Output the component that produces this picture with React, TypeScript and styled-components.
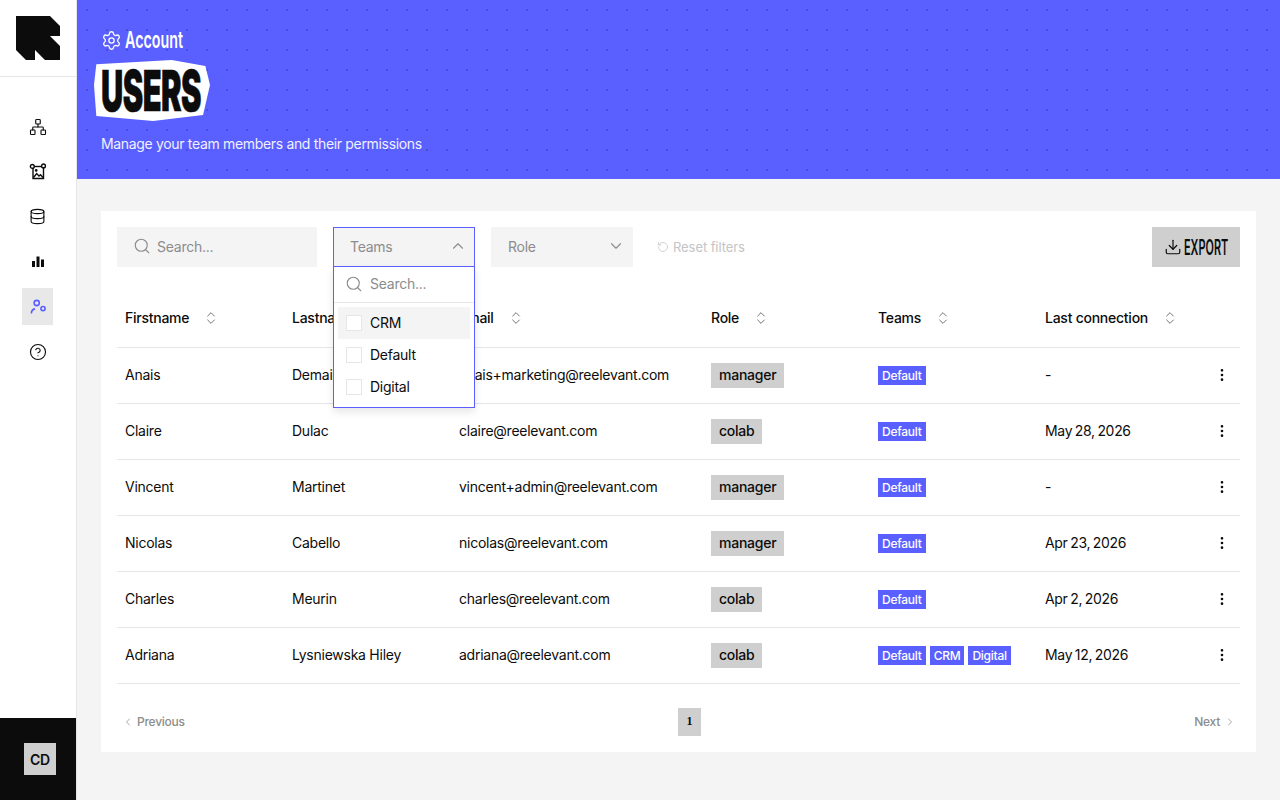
import React from 'react';
import styled, { createGlobalStyle } from 'styled-components';
import {
  ChevronDown,
  ChevronLeft,
  ChevronRight,
  ChevronUp,
  ChevronsUpDown,
  CircleHelp,
  Database,
  Download,
  EllipsisVertical,
  Network,
  RotateCcw,
  Search,
  Settings,
} from 'lucide-react';

const purple = '#5a5fff';
const line = '#e6e6e6';
const grey = '#f4f4f4';
const midGrey = '#cfcfcf';
const ink = '#0c0c0c';

const GlobalStyle = createGlobalStyle`
  html, body {
    margin: 0;
    height: 100%;
    background: ${grey};
    font-family: Inter, "Liberation Sans", sans-serif;
    letter-spacing: -0.25px;
    color: ${ink};
  }
  * { box-sizing: border-box; }
`;

const Page = styled.div`
  display: flex;
  width: 1280px;
  height: 800px;
  overflow: hidden;
`;

const Sidebar = styled.aside`
  width: 77px;
  flex: none;
  display: flex;
  flex-direction: column;
  background: #fff;
  border-right: 1px solid ${line};
`;

const LogoBox = styled.div`
  height: 77px;
  flex: none;
  padding: 16px;
  border-bottom: 1px solid ${line};
`;

const Nav = styled.nav`
  flex: 1;
  display: flex;
  flex-direction: column;
  align-items: flex-start;
  padding: 31px 0 0 22px;
  gap: 8px;
`;

const NavItem = styled.div<{ $active?: boolean }>`
  width: 31px;
  height: 37px;
  display: flex;
  align-items: center;
  justify-content: center;
  color: ${p => (p.$active ? purple : ink)};
  background: ${p => (p.$active ? '#e8e8e8' : 'transparent')};
`;

const UserBox = styled.div`
  height: 82px;
  flex: none;
  background: ${ink};
  display: flex;
  align-items: center;
  padding-left: 24px;
`;

const Avatar = styled.div`
  width: 32px;
  height: 32px;
  background: ${midGrey};
  display: flex;
  align-items: center;
  justify-content: center;
  font-size: 14px;
  font-weight: 600;
`;

const Main = styled.main`
  flex: 1;
  min-width: 0;
`;

const Banner = styled.header`
  height: 179px;
  padding: 24px 24px 0 24px;
  color: #fff;
  background-color: ${purple};
  background-image: radial-gradient(circle, rgba(20, 20, 120, 0.24) 0.8px, transparent 1.1px);
  background-size: 20px 20px;
`;

const Crumb = styled.div`
  display: flex;
  align-items: center;
  gap: 3px;
  height: 32px;
`;

const Condensed = styled.span`
  display: inline-block;
  font-weight: 600;
  font-size: 23px;
  letter-spacing: 0;
  transform: scaleX(0.62);
  transform-origin: left center;
  white-space: nowrap;
  width: 60px;
`;

const TitleBadge = styled.div`
  width: 116px;
  height: 61px;
  margin: 4px 0 0 -7px;
  background: #fff;
  color: ${ink};
  clip-path: polygon(2% 7%, 67% 0, 96% 10%, 100% 41%, 94% 90%, 51% 100%, 2% 92%, 0 41%);
  display: flex;
  align-items: center;
  padding-left: 7px;
`;

const TitleText = styled.h1`
  margin: 0;
  font-size: 56px;
  font-weight: 900;
  letter-spacing: -1px;
  white-space: nowrap;
  -webkit-text-stroke: 0.6px ${ink};
  transform: scaleX(0.55);
  transform-origin: left center;
`;

const Subtitle = styled.p`
  margin: 14px 0 0 0;
  font-size: 14px;
  line-height: 17px;
  letter-spacing: -0.33px;
  color: #f0f0ff;
`;

const Content = styled.div`
  padding: 32px 24px;
`;

const Card = styled.section`
  height: 541px;
  background: #fff;
  padding: 16px;
`;

const Toolbar = styled.div`
  display: flex;
  align-items: center;
  height: 40px;
  gap: 16px;
`;

const SearchBox = styled.div`
  width: 200px;
  height: 40px;
  background: ${grey};
  display: flex;
  align-items: center;
  gap: 6px;
  padding: 0 0 2px 16px;
  color: #8c8c8c;
  font-size: 14px;
`;

const SelectWrap = styled.div`
  position: relative;
  width: 142px;
  height: 40px;
`;

const SelectBox = styled.div<{ $open?: boolean }>`
  height: 40px;
  background: ${grey};
  border: 1px solid ${p => (p.$open ? purple : grey)};
  display: flex;
  align-items: center;
  justify-content: space-between;
  padding: 0 7px 2px 16px;
  color: #8c8c8c;
  font-size: 14px;
`;

const Menu = styled.div`
  position: absolute;
  top: 39px;
  left: 0;
  width: 142px;
  height: 142px;
  background: #fff;
  border: 1px solid ${purple};
  box-shadow: 0 4px 8px rgba(0, 0, 0, 0.1);
  z-index: 5;
`;

const MenuSearch = styled.div`
  height: 36px;
  display: flex;
  align-items: center;
  gap: 7px;
  padding: 0 0 2px 11px;
  border-bottom: 1px solid ${line};
  color: #8c8c8c;
  font-size: 14px;
`;

const MenuList = styled.div`
  padding: 4px;
`;

const MenuOption = styled.div<{ $hover?: boolean }>`
  height: 32px;
  display: flex;
  align-items: center;
  gap: 8px;
  padding-left: 8px;
  font-size: 14px;
  background: ${p => (p.$hover ? grey : 'transparent')};
`;

const OptionLabel = styled.span`
  margin-bottom: 2px;
`;

const Check = styled.span`
  width: 16px;
  height: 16px;
  background: #fff;
  border: 1px solid ${line};
`;

const ResetButton = styled.div`
  display: flex;
  align-items: center;
  gap: 4px;
  margin-left: 8px;
  color: #c4c4c4;
  font-size: 13px;
  letter-spacing: -0.08px;
`;

const ExportButton = styled.div`
  margin-left: auto;
  width: 88px;
  height: 40px;
  background: ${midGrey};
  display: flex;
  align-items: center;
  padding-left: 12px;
  gap: 2px;
`;

const ExportLabel = styled.span`
  display: inline-block;
  font-size: 21px;
  font-weight: 600;
  letter-spacing: 0;
  transform: scaleX(0.52);
  transform-origin: left center;
  white-space: nowrap;
  width: 44px;
`;

const Table = styled.table`
  width: 100%;
  table-layout: fixed;
  border-collapse: collapse;
  font-size: 14px;
`;

const HeadCell = styled.th<{ $w?: number }>`
  width: ${p => (p.$w ? `${p.$w}px` : 'auto')};
  height: 80px;
  padding: 22px 0 0 8px;
  text-align: left;
  font-weight: 500;
  border-bottom: 1px solid ${line};
`;

const HeadInner = styled.div`
  display: flex;
  align-items: center;
  gap: 14px;
  white-space: nowrap;
`;

const SortIcon = styled(ChevronsUpDown)`
  color: #555;
`;

const Cell = styled.td<{ $flush?: boolean }>`
  height: 56px;
  padding: 0 0 ${p => (p.$flush ? 0 : 2)}px 8px;
  border-bottom: 1px solid ${line};
  white-space: nowrap;
`;

const RoleTag = styled.span`
  display: inline-block;
  vertical-align: middle;
  padding: 0 8px;
  height: 25px;
  line-height: 24px;
  background: ${midGrey};
  font-weight: 500;
`;

const TagRow = styled.div`
  display: flex;
  gap: 4px;
`;

const TeamTag = styled.span`
  padding: 0 4px;
  height: 19px;
  line-height: 19px;
  background: ${purple};
  color: #fff;
  font-size: 12px;
  font-weight: 500;
`;

const RowRight = styled.div`
  display: flex;
  align-items: center;
  justify-content: space-between;
  padding-right: 10px;
  letter-spacing: -0.32px;
  word-spacing: -1px;
`;

const MoreIcon = styled(EllipsisVertical)`
  margin-top: 2px;
`;

const Pager = styled.div`
  display: flex;
  justify-content: space-between;
  align-items: center;
  margin-top: 24px;
  height: 28px;
  padding: 0 4px 0 5px;
  color: #8c8c8c;
  font-size: 12px;
  font-weight: 500;
`;

const PagerSide = styled.div<{ $gap: number }>`
  display: flex;
  align-items: center;
  gap: ${p => p.$gap}px;
`;

const PageNumber = styled.div`
  width: 23px;
  height: 28px;
  background: ${midGrey};
  color: ${ink};
  display: flex;
  align-items: center;
  justify-content: center;
  font-family: "Liberation Serif", serif;
  font-size: 12px;
  font-weight: 700;
`;

const ImageNodesIcon = () => (
  <svg width="18" height="18" viewBox="0 0 18 18" fill="none" stroke="currentColor" strokeWidth="1.4">
    <path d="M4 5v10.5h10.5V5" />
    <path d="M5 3.5h7.5" />
    <circle cx="3.3" cy="3.4" r="1.9" />
    <circle cx="14.5" cy="2.9" r="1.9" />
    <path d="M4.5 14.5l3.2-4 2.3 2.6 1.5-1.3 2.5 2.7" />
    <circle cx="7.2" cy="7.4" r="0.7" />
  </svg>
);

const BarsIcon = () => (
  <svg width="18" height="18" viewBox="0 0 18 18" fill="currentColor">
    <rect x="3" y="8" width="3" height="6" />
    <rect x="7.5" y="3.5" width="3" height="10.5" />
    <rect x="12" y="6.5" width="3" height="7.5" />
  </svg>
);

const PeopleIcon = () => (
  <svg width="18" height="18" viewBox="0 0 18 18" fill="none" stroke="currentColor" strokeWidth="1.6">
    <circle cx="7.7" cy="5" r="2.6" />
    <circle cx="14" cy="10.6" r="2.1" />
    <path d="M2.4 15.5c0-2.6 1.3-4.2 3.6-4.6" />
  </svg>
);

const Logo = () => (
  <svg width="44" height="44" viewBox="16 16 44 44" fill={ink}>
    <polygon points="16,16 50,16 60,26 60,36 50,36 60,46 60,60 45,60 35,50 35,60 26,60 16,50" />
  </svg>
);

const columns: { label: string; width?: number }[] = [
  { label: 'Firstname', width: 167 },
  { label: 'Lastname', width: 167 },
  { label: 'Email', width: 252 },
  { label: 'Role', width: 167 },
  { label: 'Teams', width: 167 },
  { label: 'Last connection' },
];

const users = [
  { first: 'Anais', last: 'Demaille', email: 'anais+marketing@reelevant.com', role: 'manager', teams: ['Default'], seen: '-' },
  { first: 'Claire', last: 'Dulac', email: 'claire@reelevant.com', role: 'colab', teams: ['Default'], seen: 'May 28, 2026' },
  { first: 'Vincent', last: 'Martinet', email: 'vincent+admin@reelevant.com', role: 'manager', teams: ['Default'], seen: '-' },
  { first: 'Nicolas', last: 'Cabello', email: 'nicolas@reelevant.com', role: 'manager', teams: ['Default'], seen: 'Apr 23, 2026' },
  { first: 'Charles', last: 'Meurin', email: 'charles@reelevant.com', role: 'colab', teams: ['Default'], seen: 'Apr 2, 2026' },
  { first: 'Adriana', last: 'Lysniewska Hiley', email: 'adriana@reelevant.com', role: 'colab', teams: ['Default', 'CRM', 'Digital'], seen: 'May 12, 2026' },
];

const App: React.FC = () => (
  <Page>
    <GlobalStyle />
    <Sidebar>
      <LogoBox>
        <Logo />
      </LogoBox>
      <Nav>
        <NavItem><Network size={18} strokeWidth={1.5} /></NavItem>
        <NavItem><ImageNodesIcon /></NavItem>
        <NavItem><Database size={17} strokeWidth={1.6} /></NavItem>
        <NavItem><BarsIcon /></NavItem>
        <NavItem $active><PeopleIcon /></NavItem>
        <NavItem><CircleHelp size={18} strokeWidth={1.5} /></NavItem>
      </Nav>
      <UserBox>
        <Avatar>CD</Avatar>
      </UserBox>
    </Sidebar>
    <Main>
      <Banner>
        <Crumb>
          <Settings size={21} strokeWidth={1.5} />
          <Condensed>Account</Condensed>
        </Crumb>
        <TitleBadge>
          <TitleText>USERS</TitleText>
        </TitleBadge>
        <Subtitle>Manage your team members and their permissions</Subtitle>
      </Banner>
      <Content>
        <Card>
          <Toolbar>
            <SearchBox>
              <Search size={18} strokeWidth={1.5} />
              Search...
            </SearchBox>
            <SelectWrap>
              <SelectBox $open>
                Teams
                <ChevronUp size={18} strokeWidth={1.5} />
              </SelectBox>
              <Menu>
                <MenuSearch>
                  <Search size={18} strokeWidth={1.5} />
                  Search...
                </MenuSearch>
                <MenuList>
                  <MenuOption $hover><Check /><OptionLabel>CRM</OptionLabel></MenuOption>
                  <MenuOption><Check /><OptionLabel>Default</OptionLabel></MenuOption>
                  <MenuOption><Check /><OptionLabel>Digital</OptionLabel></MenuOption>
                </MenuList>
              </Menu>
            </SelectWrap>
            <SelectWrap>
              <SelectBox>
                Role
                <ChevronDown size={18} strokeWidth={1.5} />
              </SelectBox>
            </SelectWrap>
            <ResetButton>
              <RotateCcw size={12} strokeWidth={1.5} />
              Reset filters
            </ResetButton>
            <ExportButton>
              <Download size={18} strokeWidth={1.6} />
              <ExportLabel>EXPORT</ExportLabel>
            </ExportButton>
          </Toolbar>
          <Table>
            <thead>
              <tr>
                {columns.map(col => (
                  <HeadCell key={col.label} $w={col.width}>
                    <HeadInner>
                      {col.label}
                      <SortIcon size={16} strokeWidth={1.25} />
                    </HeadInner>
                  </HeadCell>
                ))}
              </tr>
            </thead>
            <tbody>
              {users.map(user => (
                <tr key={user.email}>
                  <Cell>{user.first}</Cell>
                  <Cell>{user.last}</Cell>
                  <Cell>{user.email}</Cell>
                  <Cell $flush><RoleTag>{user.role}</RoleTag></Cell>
                  <Cell $flush>
                    <TagRow>
                      {user.teams.map(team => (
                        <TeamTag key={team}>{team}</TeamTag>
                      ))}
                    </TagRow>
                  </Cell>
                  <Cell>
                    <RowRight>
                      {user.seen}
                      <MoreIcon size={16} strokeWidth={2} />
                    </RowRight>
                  </Cell>
                </tr>
              ))}
            </tbody>
          </Table>
          <Pager>
            <PagerSide $gap={3}>
              <ChevronLeft size={12} strokeWidth={1.5} />
              Previous
            </PagerSide>
            <PageNumber>1</PageNumber>
            <PagerSide $gap={4}>
              Next
              <ChevronRight size={12} strokeWidth={1.5} />
            </PagerSide>
          </Pager>
        </Card>
      </Content>
    </Main>
  </Page>
);

export default App;
